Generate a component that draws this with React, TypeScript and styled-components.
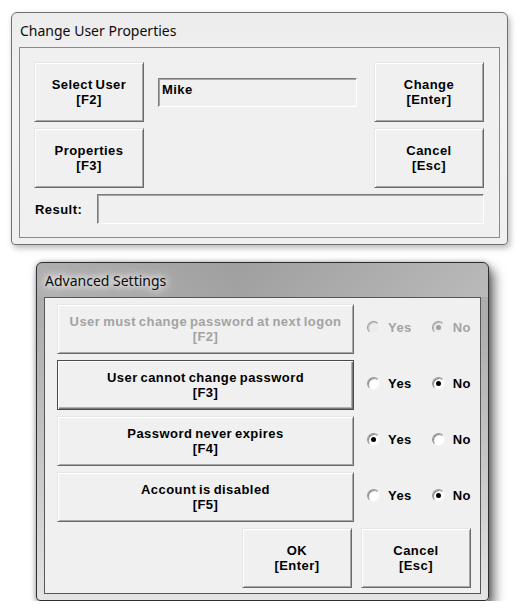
import React from "react";
import styled, { createGlobalStyle, css } from "styled-components";

const GlobalStyle = createGlobalStyle`
  html, body {
    margin: 0;
    padding: 0;
    background: #ffffff;
  }
  * {
    box-sizing: border-box;
  }
`;

const Page = styled.div`
  display: flex;
  flex-direction: column;
  align-items: flex-start;
  padding-top: 12px;
  font-family: "Liberation Sans", Arial, sans-serif;
`;

const Window = styled.div<{ $active?: boolean; $left: number; $width: number; $height: number; $top: number }>`
  margin-left: ${(p) => p.$left}px;
  margin-top: ${(p) => p.$top}px;
  width: ${(p) => p.$width}px;
  height: ${(p) => p.$height}px;
  display: flex;
  flex-direction: column;
  padding: 0 6px 6px 6px;
  border: 1px solid ${(p) => (p.$active ? "#2e2e2e" : "#707070")};
  border-radius: 6px 6px 4px 4px;
  ${(p) =>
    p.$active
      ? css`
          background: linear-gradient(180deg, #a9a9a9 0%, #b2b2b2 25%, #c8c8c8 60%, #e4e4e4 100%);
          box-shadow: 5px 7px 12px rgba(0, 0, 0, 0.6), 0 0 5px rgba(0, 0, 0, 0.3);
        `
      : css`
          background: linear-gradient(180deg, #ececec 0%, #f3f3f3 40%, #f0f0f0 100%);
          box-shadow: 2px 3px 6px rgba(0, 0, 0, 0.28);
        `}
`;

const TitleBar = styled.div<{ $active?: boolean }>`
  height: 34px;
  display: flex;
  align-items: center;
  margin: 0 -6px;
  padding: 0 8px;
  border-radius: 5px 5px 0 0;
  ${(p) =>
    p.$active &&
    css`
      background: linear-gradient(90deg, rgba(255, 255, 255, 0.06) 0%, rgba(0, 0, 0, 0.06) 45%, rgba(255, 255, 255, 0.16) 100%);
    `}
`;

const TitleText = styled.span<{ $active?: boolean }>`
  font-family: "Noto Sans", "Open Sans", sans-serif;
  font-size: 14px;
  color: #0c0c0c;
  ${(p) =>
    p.$active &&
    css`
      text-shadow: 0 0 6px #ffffff, 0 0 10px rgba(255, 255, 255, 0.95), 0 0 16px rgba(255, 255, 255, 0.8);
    `}
`;

const Panel = styled.div<{ $dark?: boolean }>`
  flex: 1;
  margin: 0 1px;
  background: #f0f0f0;
  border: 1px solid ${(p) => (p.$dark ? "#555555" : "#8a8a8a")};
`;

const MainGrid = styled.div`
  display: grid;
  grid-template-columns: 110px 1fr 110px;
  grid-template-rows: 60px 60px 30px;
  column-gap: 14px;
  row-gap: 6px;
  padding: 14px 15px 13px 14px;
`;

const raised = css`
  background: #f0f0f0;
  border: 1px solid;
  border-color: #e6e6e6 #6a6a6a #6a6a6a #e6e6e6;
  box-shadow: inset 1px 1px 0 #ffffff, inset -1px -1px 0 #a8a8a8;
`;

const boldText = css`
  font-family: "Liberation Sans", Arial, sans-serif;
  font-weight: bold;
  font-size: 13px;
  letter-spacing: 0.45px;
  word-spacing: -1.2px;
`;

const Button = styled.button<{ $focused?: boolean; $disabled?: boolean }>`
  ${raised}
  ${boldText}
  display: flex;
  flex-direction: column;
  align-items: center;
  justify-content: center;
  padding: 0;
  line-height: 15px;
  color: ${(p) => (p.$disabled ? "#a3a3a3" : "#000000")};
  cursor: default;
  ${(p) =>
    p.$focused &&
    css`
      border-color: #4a4a4a;
      box-shadow: inset 1px 1px 0 #ffffff, inset -1px -1px 0 #7a7a7a, inset -2px -2px 0 #b0b0b0;
    `}
`;

const sunken = css`
  background: #f0f0f0;
  border: 1px solid;
  border-color: #7c7c7c #ffffff #ffffff #7c7c7c;
  box-shadow: inset 1px 1px 0 #a5a5a5;
`;

const NameField = styled.div`
  ${sunken}
  ${boldText}
  align-self: center;
  width: 199px;
  height: 29px;
  padding: 3px 3px;
  line-height: 15px;
  color: #000;
`;

const ResultRow = styled.div`
  grid-column: 1 / -1;
  display: flex;
  align-items: center;
`;

const ResultLabel = styled.span`
  ${boldText}
  width: 63px;
  padding-left: 1px;
  color: #000;
`;

const ResultField = styled.div`
  ${sunken}
  flex: 1;
  height: 30px;
`;

const AdvancedBody = styled.div`
  display: flex;
  flex-direction: column;
  gap: 6px;
  padding: 6px 9px 5px 12px;
`;

const OptionRow = styled.div`
  display: flex;
  align-items: center;
  height: 50px;
`;

const OptionButton = styled(Button)`
  width: 298px;
  height: 50px;
`;

const RadioGroup = styled.div`
  display: flex;
  align-items: center;
  margin-left: 13px;
  margin-top: -3px;
  gap: 20px;
`;

const RadioItem = styled.label<{ $disabled?: boolean }>`
  ${boldText}
  display: flex;
  align-items: center;
  gap: 8px;
  color: ${(p) => (p.$disabled ? "#a3a3a3" : "#000")};
`;

const RadioCircle = styled.span<{ $checked?: boolean; $disabled?: boolean }>`
  position: relative;
  width: 13px;
  height: 13px;
  border-radius: 50%;
  border: 1px solid;
  border-color: #9a9a9a #f4f4f4 #f4f4f4 #9a9a9a;
  background: ${(p) => (p.$disabled ? "#ececec" : "#ffffff")};
  box-shadow: inset 1px 1px 0 ${(p) => (p.$disabled ? "#c4c4c4" : "#8a8a8a")};

  &::after {
    content: "";
    display: ${(p) => (p.$checked ? "block" : "none")};
    position: absolute;
    left: 3px;
    top: 3px;
    width: 5px;
    height: 5px;
    border-radius: 50%;
    background: ${(p) => (p.$disabled ? "#a0a0a0" : "#000")};
  }
`;

const FooterRow = styled.div`
  display: flex;
  justify-content: flex-end;
  gap: 9px;
  height: 60px;
`;

const FooterButton = styled(Button)`
  width: 110px;
  height: 60px;
`;

type Option = { label: string; key: string; yes: boolean; disabled?: boolean; focused?: boolean };

const options: Option[] = [
  { label: "User must change password at next logon", key: "[F2]", yes: false, disabled: true },
  { label: "User cannot change password", key: "[F3]", yes: false, focused: true },
  { label: "Password never expires", key: "[F4]", yes: true },
  { label: "Account is disabled", key: "[F5]", yes: false },
];

const Radio: React.FC<{ text: string; checked: boolean; disabled?: boolean }> = ({ text, checked, disabled }) => (
  <RadioItem $disabled={disabled}>
    <RadioCircle $checked={checked} $disabled={disabled} />
    {text}
  </RadioItem>
);

export default function App() {
  return (
    <Page>
      <GlobalStyle />
      <Window $left={11} $top={0} $width={497} $height={233}>
        <TitleBar>
          <TitleText>Change User Properties</TitleText>
        </TitleBar>
        <Panel>
          <MainGrid>
            <Button>
              <span>Select User</span>
              <span>[F2]</span>
            </Button>
            <NameField>Mike</NameField>
            <Button>
              <span>Change</span>
              <span>[Enter]</span>
            </Button>
            <Button>
              <span>Properties</span>
              <span>[F3]</span>
            </Button>
            <div />
            <Button>
              <span>Cancel</span>
              <span>[Esc]</span>
            </Button>
            <ResultRow>
              <ResultLabel>Result:</ResultLabel>
              <ResultField />
            </ResultRow>
          </MainGrid>
        </Panel>
      </Window>

      <Window $active $left={36} $top={17} $width={453} $height={339}>
        <TitleBar $active>
          <TitleText $active>Advanced Settings</TitleText>
        </TitleBar>
        <Panel $dark>
          <AdvancedBody>
            {options.map((o) => (
              <OptionRow key={o.key}>
                <OptionButton $disabled={o.disabled} $focused={o.focused}>
                  <span>{o.label}</span>
                  <span>{o.key}</span>
                </OptionButton>
                <RadioGroup>
                  <Radio text="Yes" checked={o.yes} disabled={o.disabled} />
                  <Radio text="No" checked={!o.yes} disabled={o.disabled} />
                </RadioGroup>
              </OptionRow>
            ))}
            <FooterRow>
              <FooterButton>
                <span>OK</span>
                <span>[Enter]</span>
              </FooterButton>
              <FooterButton>
                <span>Cancel</span>
                <span>[Esc]</span>
              </FooterButton>
            </FooterRow>
          </AdvancedBody>
        </Panel>
      </Window>
    </Page>
  );
}
